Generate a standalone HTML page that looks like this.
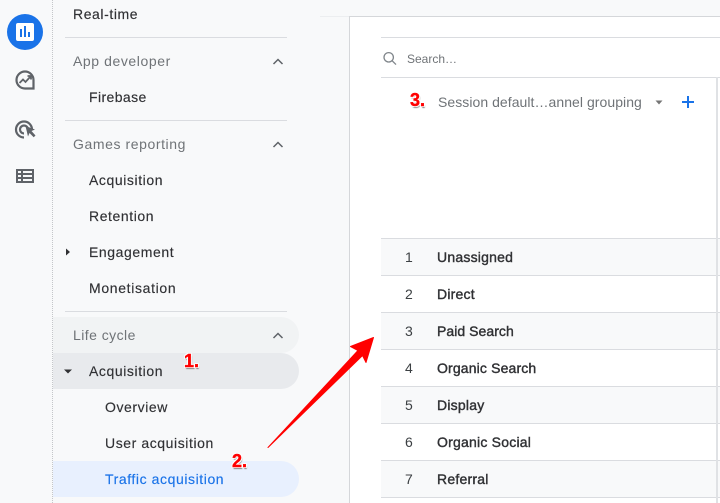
<!DOCTYPE html>
<html><head><meta charset="utf-8"><style>
html,body{margin:0;padding:0}
body{width:720px;height:503px;overflow:hidden;position:relative;background:#fff;font-family:"Liberation Sans",sans-serif}
.a{position:absolute}
.t{position:absolute;font-size:14px;line-height:20px;white-space:nowrap;color:#303134;letter-spacing:.58px;-webkit-text-stroke:.15px #303134}
.g{color:#6f7377;-webkit-text-stroke:0}
.h{height:1px;background:#dadce0;position:absolute}
.row{position:absolute;left:381px;width:339px;height:36px;border-bottom:1px solid #dadce0}
.row.o{background:#f8f9fa}
.n{position:absolute;left:405px;font-size:14px;line-height:20px;color:#3c4043}
.d{position:absolute;left:437px;font-size:14px;line-height:20px;color:#303134;letter-spacing:.22px;white-space:nowrap;-webkit-text-stroke:.4px #303134}
.r{position:absolute;color:#f00;font-weight:bold;font-size:18px;line-height:18px;text-shadow:1px 1px 0 #fff,-1px -1px 0 #fff,1px -1px 0 #fff,-1px 1px 0 #fff,1px 2px 1px #888;-webkit-text-stroke:.4px #f00}
</style></head><body>
<div class="a" style="left:0;top:0;width:350px;height:503px;background:#f8f9fa"></div>
<div class="a" style="left:350px;top:0;width:370px;height:16px;background:#f8f9fa;border-bottom:1px solid #d5d7da"></div>
<div class="a" style="left:320px;top:16px;width:30px;height:1px;background:#eceef0"></div>
<div class="a" style="left:349px;top:16px;width:1px;height:487px;background:#d5d7da"></div>
<div class="a" style="left:52px;top:0;width:0;height:503px;border-left:1px dotted #c4c6c9"></div>

<svg class="a" style="left:0;top:0" width="52" height="200" viewBox="0 0 52 200">
<circle cx="25" cy="32" r="18" fill="#1a73e8"/>
<rect x="16" y="23" width="18" height="18" rx="2" fill="#fff"/>
<path d="M20 29h2v8h-2zM24 26h2v11h-2zM28 32h2v5h-2z" fill="#1a73e8"/>
<g fill="none" stroke="#5f6368" stroke-width="2.200">
<path d="M33.500 80A8.500 8.500 0 1 0 25 88.500H33.500V80"/>
</g>
<g fill="none" stroke="#5f6368" stroke-width="1.800">
<path d="M19.500 83l3.500-3.500 2.500 2.500 5-5.500M27.500 76h3.500v3.500"/>
</g>
<g fill="none" stroke="#5f6368" stroke-width="2.200">
<path d="M24 137.500a8 8 0 1 1 8-8"/>
<path d="M24 133.500a4 4 0 1 1 4-4"/>
</g>
<path d="M25.500 126l9.500 3.500-3.500 1.500 4 4.500-1.800 1.800-4.200-4.300-1.500 3.500z" fill="#5f6368"/>
<path d="M16 169h18v14H16zM18 171v2h3v-2zM23 171v2h9v-2zM18 175v2h3v-2zM23 175v2h9v-2zM18 179v2h3v-2zM23 179v2h9v-2z" fill="#5f6368" fill-rule="evenodd"/>
</svg>

<div class="a" style="left:53px;top:317px;width:246px;height:36px;border-radius:0 18px 18px 0;background:#f1f3f4"></div>
<div class="a" style="left:53px;top:353px;width:246px;height:36px;border-radius:0 18px 18px 0;background:#e8eaed"></div>
<div class="a" style="left:53px;top:461px;width:246px;height:36px;border-radius:0 18px 18px 0;background:#e8f0fe"></div>

<div class="h" style="left:65px;top:37px;width:222px"></div>
<div class="h" style="left:65px;top:120px;width:222px"></div>
<div class="h" style="left:65px;top:311px;width:222px"></div>

<div class="t" style="left:73px;top:4px">Real-time</div>
<div class="t g" style="left:73px;top:51px">App developer</div>
<div class="t" style="left:89px;top:87px;letter-spacing:.4px">Firebase</div>
<div class="t g" style="left:73px;top:134px">Games reporting</div>
<div class="t" style="left:89px;top:170px">Acquisition</div>
<div class="t" style="left:89px;top:206px">Retention</div>
<div class="t" style="left:89px;top:242px">Engagement</div>
<div class="t" style="left:89px;top:278px;letter-spacing:.66px">Monetisation</div>
<div class="t g" style="left:73px;top:325px;letter-spacing:.45px">Life cycle</div>
<div class="t" style="left:89px;top:361px">Acquisition</div>
<div class="t" style="left:105px;top:397px">Overview</div>
<div class="t" style="left:105px;top:433px">User acquisition</div>
<div class="t" style="left:105px;top:469px;color:#1a73e8;-webkit-text-stroke:.15px #1a73e8">Traffic acquisition</div>

<svg class="a" style="left:0;top:0" width="720" height="503" viewBox="0 0 720 503">
<g fill="none" stroke="#5f6368" stroke-width="1.500">
<path d="M273.500 64l4.500-4.500 4.500 4.500M273.500 147l4.500-4.500 4.500 4.500M273.500 338l4.500-4.500 4.500 4.500"/>
</g>
<g fill="none" stroke="#80868b" stroke-width="1.300">
<circle cx="388.700" cy="57.300" r="4.700"/><path d="M392.200 60.800l3.800 3.800"/>
</g>
<path d="M66 248.500l4 3.500-4 3.500zM64 369.500h8l-4 4z" fill="#303134"/>
<path d="M655.500 100.500h7l-3.500 4z" fill="#757575"/>
<path d="M682 102h12M688 96v12" stroke="#1a73e8" stroke-width="2" fill="none"/>
</svg>

<div class="h" style="left:381px;top:37px;width:339px"></div>
<div class="h" style="left:381px;top:77px;width:339px"></div>
<div class="t g" style="left:407px;top:49px;font-size:12px;letter-spacing:0">Search…</div>
<div class="t g" style="left:438px;top:92px;letter-spacing:.05px">Session default…annel grouping</div>

<div class="row o" style="top:238px;border-top:1px solid #dadce0"></div>
<div class="row" style="top:276px"></div>
<div class="row o" style="top:313px"></div>
<div class="row" style="top:350px"></div>
<div class="row o" style="top:387px"></div>
<div class="row" style="top:424px"></div>
<div class="row o" style="top:461px"></div>
<div class="a" style="left:716px;top:77px;width:2px;height:426px;background:#e0e2e5"></div>

<div class="n" style="top:247px">1</div><div class="d" style="top:247px">Unassigned</div>
<div class="n" style="top:284px">2</div><div class="d" style="top:284px">Direct</div>
<div class="n" style="top:321px">3</div><div class="d" style="top:321px;letter-spacing:.05px">Paid Search</div>
<div class="n" style="top:358px">4</div><div class="d" style="top:358px;letter-spacing:.15px">Organic Search</div>
<div class="n" style="top:395px">5</div><div class="d" style="top:395px">Display</div>
<div class="n" style="top:432px">6</div><div class="d" style="top:432px">Organic Social</div>
<div class="n" style="top:469px">7</div><div class="d" style="top:469px">Referral</div>

<svg class="a" style="left:0;top:0" width="720" height="503" viewBox="0 0 720 503">
<path d="M268 447.500L358 350.500L350.500 346.500L373.500 337.500L366 362.500L362.500 355.500z" fill="#f00" stroke="#f00" stroke-width="1" stroke-linejoin="round"/>
</svg>

<div class="r" style="left:184px;top:352px">1.</div>
<div class="r" style="left:232px;top:452px">2.</div>
<div class="r" style="left:410px;top:91px">3.</div>
</body></html>
